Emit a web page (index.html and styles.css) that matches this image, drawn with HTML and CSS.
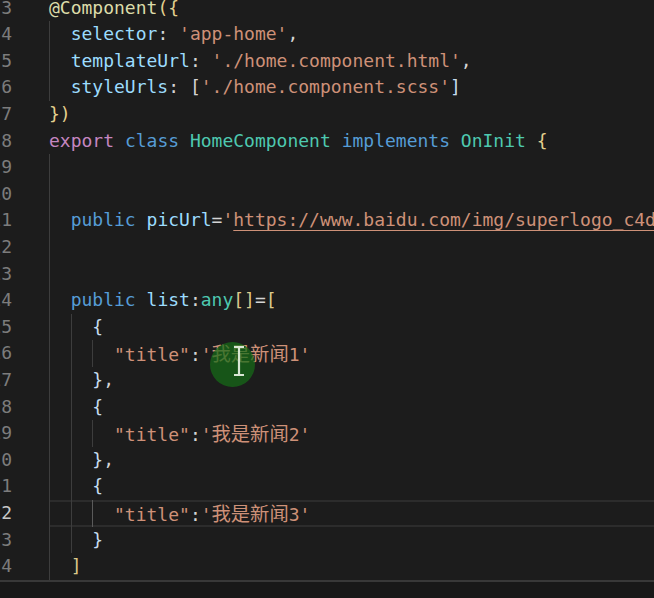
FILE: index.html
```html
<!DOCTYPE html>
<html lang="zh">
<head>
    <meta charset="UTF-8">
    <meta name="viewport" content="width=device-width, initial-scale=1.0">
    <title>home.component.ts</title>
    <link rel="stylesheet" href="styles.css">
</head>
<body>
    <div class="editor">
        <div class="line"><span class="ln">3</span><span class="code"><span class="txt"><span class="fn">@Component</span><span class="b1">({</span></span></span></div>
        <div class="line"><span class="ln">4</span><span class="code"><span class="ind"></span><span class="txt"><span class="pr">selector</span><span class="pn">: </span><span class="st">'app-home'</span><span class="pn">,</span></span></span></div>
        <div class="line"><span class="ln">5</span><span class="code"><span class="ind"></span><span class="txt"><span class="pr">templateUrl</span><span class="pn">: </span><span class="st">'./home.component.html'</span><span class="pn">,</span></span></span></div>
        <div class="line"><span class="ln">6</span><span class="code"><span class="ind"></span><span class="txt"><span class="pr">styleUrls</span><span class="pn">: </span><span class="pn">[</span><span class="st">'./home.component.scss'</span><span class="b3">]</span></span></span></div>
        <div class="line"><span class="ln">7</span><span class="code"><span class="txt"><span class="b1">})</span></span></span></div>
        <div class="line"><span class="ln">8</span><span class="code"><span class="txt"><span class="ex">export</span> <span class="kw">class</span> <span class="ty">HomeComponent</span> <span class="kw">implements</span> <span class="ty">OnInit</span> <span class="b1">{</span></span></span></div>
        <div class="line"><span class="ln">9</span><span class="code"><span class="ind"></span></span></div>
        <div class="line"><span class="ln">10</span><span class="code"><span class="ind"></span></span></div>
        <div class="line"><span class="ln">11</span><span class="code"><span class="ind"></span><span class="txt"><span class="kw">public</span> <span class="pr">picUrl</span><span class="pn">=</span><span class="st">'<span class="link">https://www.baidu.com/img/superlogo_c4d</span></span></span></span></div>
        <div class="line"><span class="ln">12</span><span class="code"><span class="ind"></span></span></div>
        <div class="line"><span class="ln">13</span><span class="code"><span class="ind"></span></span></div>
        <div class="line"><span class="ln">14</span><span class="code"><span class="ind"></span><span class="txt"><span class="kw">public</span> <span class="pr">list</span><span class="pn">:</span><span class="ty">any</span><span class="b2">[]</span><span class="pn">=</span><span class="b2">[</span></span></span></div>
        <div class="line"><span class="ln">15</span><span class="code"><span class="ind"></span><span class="ind"></span><span class="txt"><span class="b3">{</span></span></span></div>
        <div class="line"><span class="ln">16</span><span class="code"><span class="ind"></span><span class="ind"></span><span class="ind"></span><span class="txt"><span class="st">"title"</span><span class="pn">:</span><span class="st">'<span class="cjk">我是新闻</span>1'</span></span></span></div>
        <div class="line"><span class="ln">17</span><span class="code"><span class="ind"></span><span class="ind"></span><span class="txt"><span class="b3">}</span><span class="pn">,</span></span></span></div>
        <div class="line"><span class="ln">18</span><span class="code"><span class="ind"></span><span class="ind"></span><span class="txt"><span class="b3">{</span></span></span></div>
        <div class="line"><span class="ln">19</span><span class="code"><span class="ind"></span><span class="ind"></span><span class="ind"></span><span class="txt"><span class="st">"title"</span><span class="pn">:</span><span class="st">'<span class="cjk">我是新闻</span>2'</span></span></span></div>
        <div class="line"><span class="ln">20</span><span class="code"><span class="ind"></span><span class="ind"></span><span class="txt"><span class="b3">}</span><span class="pn">,</span></span></span></div>
        <div class="line"><span class="ln">21</span><span class="code"><span class="ind"></span><span class="ind"></span><span class="txt"><span class="b3">{</span></span></span></div>
        <div class="line active"><span class="ln">22</span><span class="code"><span class="ind"></span><span class="ind"></span><span class="ind on"></span><span class="txt"><span class="st">"title"</span><span class="pn">:</span><span class="st">'<span class="cjk">我是新闻</span>3'</span></span></span></div>
        <div class="line"><span class="ln">23</span><span class="code"><span class="ind"></span><span class="ind"></span><span class="txt"><span class="b3">}</span></span></span></div>
        <div class="line"><span class="ln">24</span><span class="code"><span class="ind"></span><span class="txt"><span class="b2">]</span></span></span></div>
    </div>
    <div class="panel"></div>

    <!-- mouse click highlight from the screen recorder -->
    <div class="click">
        <svg width="14" height="32" viewBox="0 0 14 32">
            <path d="M2 2h10M7 2v28M2 30h10" stroke="#d9e6d4" stroke-width="2.2" fill="none"/>
        </svg>
    </div>
</body>
</html>
```

FILE: styles.css
```css
* {
    margin: 0;
    padding: 0;
    box-sizing: border-box;
}

html,
body {
    width: 100%;
    height: 100%;
    overflow: hidden;
}

body {
    background-color: #1c1c1c;
    font-family: "DejaVu Sans Mono", "Liberation Mono", monospace;
    font-size: 18px;
    color: #d4d4d4;
}

.editor {
    margin-top: -5.3px;
    margin-left: -11px;
    width: calc(100% + 11px);
    overflow: hidden;
}

.line {
    display: flex;
    height: 26.6px;
    line-height: 26.6px;
    white-space: pre;
}

.ln {
    flex: none;
    width: 23px;
    margin-right: 37px;
    text-align: right;
    color: #7c7c7c;
}

.line.active .ln {
    color: #c8c8c8;
}

.code {
    flex: 1;
    display: flex;
}

.line.active .code {
    box-shadow: inset 0 2px #2c2c2c, inset 0 -2px #2c2c2c;
}

.ind {
    flex: none;
    width: 2ch;
    border-left: 1px solid #3d3d3d;
}

.ind.on {
    border-left-color: #5a5a5a;
}

.txt {
    flex: none;
}

.fn { color: #dcdcaa; }
.kw { color: #569cd6; }
.ex { color: #c586c0; }
.pr { color: #9cdcfe; }
.st { color: #ce9178; }
.ty { color: #4ec9b0; }
.pn { color: #d4d4d4; }
.b1 { color: #e3d08e; }
.b2 { color: #dcc98a; }
.b3 { color: #c6dcef; }

.link {
    text-decoration: underline;
    text-underline-offset: 4px;
}

.cjk {
    font-family: "Noto Sans CJK SC", sans-serif;
    font-size: 19.3px;
}

.panel {
    height: 20px;
    border-top: 2px solid #383838;
    background-color: #181818;
}

.click {
    position: absolute;
    left: 210px;
    top: 342px;
    width: 45px;
    height: 45px;
    border-radius: 50%;
    background-color: rgba(22, 108, 24, 0.72);
    display: flex;
    align-items: center;
    justify-content: center;
}

.click svg {
    margin-left: 13px;
    margin-bottom: 8px;
}
```
